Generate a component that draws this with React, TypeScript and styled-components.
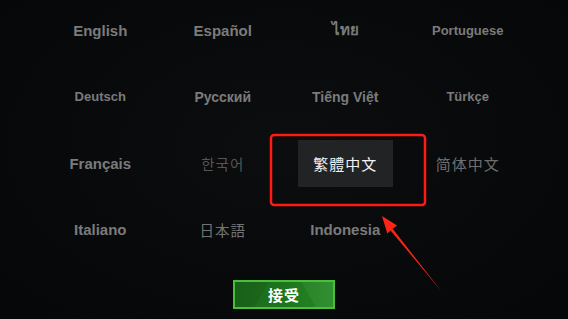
import styled, { createGlobalStyle } from 'styled-components'

// Tela de seleção de idioma
const GlobalStyle = createGlobalStyle`
  html, body {
    margin: 0;
    padding: 0;
    background: #08090b;
  }
  #root {
    width: 568px;
    height: 319px;
  }
`

const Screen = styled.div`
  position: relative;
  width: 568px;
  height: 319px;
  overflow: hidden;
  background: radial-gradient(ellipse at 50% 45%, #0c0d0f 0%, #08090b 60%, #060709 100%);
  display: flex;
  flex-direction: column;
  align-items: center;
  font-family: "Liberation Sans", Arial, "Noto Sans CJK SC", sans-serif;
`

const Grid = styled.ul`
  list-style: none;
  margin: 0;
  padding: 7px 0 0;
  display: grid;
  grid-template-columns: repeat(4, 95px);
  grid-auto-rows: 46.5px;
  column-gap: 27.5px;
  row-gap: 20px;
`

const Lang = styled.li<{ $size: number; $active?: boolean; $tone?: string; $weight?: number; $cjk?: string }>`
  display: flex;
  align-items: center;
  justify-content: center;
  white-space: nowrap;
  font-size: ${({ $size }) => $size}px;
  font-weight: ${({ $weight }) => $weight ?? 700};
  color: ${({ $active, $tone }) => ($active ? '#f2f2f2' : $tone ?? '#7b7b7b')};
  background: ${({ $active }) => ($active ? '#222325' : 'transparent')};
  letter-spacing: ${({ $cjk }) => ($cjk ? '1px' : '0')};
  font-family: ${({ $cjk }) =>
    $cjk ? `"${$cjk}", sans-serif` : '"Liberation Sans", Arial, "Noto Sans", "DejaVu Sans", sans-serif'};
`

const Accept = styled.button`
  margin-top: 27px;
  width: 102px;
  height: 29px;
  border: 2px solid #4cbf39;
  background:
    linear-gradient(120deg, rgba(0, 0, 0, 0.08) 0 30%, transparent 30% 100%),
    linear-gradient(60deg, transparent 0 72%, rgba(255, 255, 255, 0.05) 72% 100%),
    linear-gradient(90deg, #1b681b 0%, #1e761e 55%, #258a25 100%);
  color: #fff;
  font-family: "Noto Sans CJK SC", sans-serif;
  font-weight: 700;
  font-size: 15px;
  letter-spacing: 1px;
  padding: 0;
  line-height: 1;
  cursor: pointer;
`

const Overlay = styled.svg`
  position: absolute;
  left: 0;
  top: 0;
  pointer-events: none;
`

type Item = { label: string; size: number; tone?: string; weight?: number; cjk?: string; active?: boolean }

const langs: Item[] = [
  { label: 'English', size: 15 },
  { label: 'Español', size: 15 },
  { label: 'ไทย', size: 15 },
  { label: 'Portuguese', size: 13 },
  { label: 'Deutsch', size: 13 },
  { label: 'Русский', size: 14 },
  { label: 'Tiếng Việt', size: 14 },
  { label: 'Türkçe', size: 13 },
  { label: 'Français', size: 15 },
  { label: '한국어', size: 14.5, weight: 400, tone: '#555555', cjk: 'Noto Sans CJK KR' },
  { label: '繁體中文', size: 15, weight: 400, cjk: 'Noto Sans CJK TC', active: true },
  { label: '简体中文', size: 15, weight: 400, tone: '#6e6e6e', cjk: 'Noto Sans CJK SC' },
  { label: 'Italiano', size: 15 },
  { label: '日本語', size: 14.5, weight: 400, tone: '#747474', cjk: 'Noto Sans CJK JP' },
  { label: 'Indonesia', size: 15 },
]

export default function App() {
  return (
    <>
      <GlobalStyle />
      <Screen>
        <Grid>
          {langs.map((l) => (
            <Lang
              key={l.label}
              $size={l.size}
              $tone={l.tone}
              $weight={l.weight}
              $cjk={l.cjk}
              $active={l.active}
            >
              {l.label}
            </Lang>
          ))}
        </Grid>
        <Accept>接受</Accept>
        <Overlay width="568" height="319" viewBox="0 0 568 319">
          <rect x="271" y="135" width="154" height="70" rx="3" fill="none" stroke="#ff1a12" strokeWidth="2.5" />
          <polygon
            points="382,216 397,225.5 392.6,228.8 442,292 390.6,230.4 387.3,233.5"
            fill="#ff2516"
          />
        </Overlay>
      </Screen>
    </>
  )
}
